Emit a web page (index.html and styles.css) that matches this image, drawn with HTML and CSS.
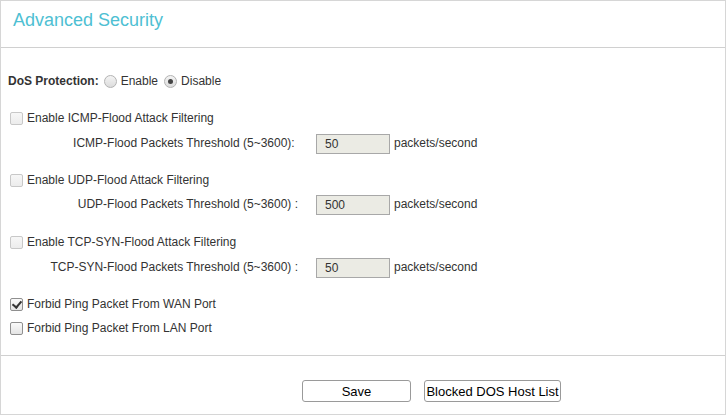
FILE: index.html
```html
<!DOCTYPE html>
<html>
<head>
<meta charset="utf-8">
<link rel="stylesheet" href="styles.css">
</head>
<body>
<div class="panel">
  <div class="header"><h1 class="title">Advanced Security</h1></div>
  <div class="content">
    <div class="row dos">
      <span class="bold">DoS Protection:</span>
      <label class="opt"><input type="radio" name="dos" class="radio">Enable</label>
      <label class="opt"><input type="radio" name="dos" class="radio" checked>Disable</label>
    </div>

    <label class="row check r-icmp"><input type="checkbox" class="cb" disabled>Enable ICMP-Flood Attack Filtering</label>
    <div class="row thresh t1">
      <span class="tlabel">ICMP-Flood Packets Threshold (5~3600):&nbsp;</span>
      <input class="num" type="text" value="50" disabled>
      <span class="unit">packets/second</span>
    </div>

    <label class="row check r-udp"><input type="checkbox" class="cb" disabled>Enable UDP-Flood Attack Filtering</label>
    <div class="row thresh t2">
      <span class="tlabel">UDP-Flood Packets Threshold (5~3600) :</span>
      <input class="num" type="text" value="500" disabled>
      <span class="unit">packets/second</span>
    </div>

    <label class="row check r-tcp"><input type="checkbox" class="cb" disabled>Enable TCP-SYN-Flood Attack Filtering</label>
    <div class="row thresh t3">
      <span class="tlabel">TCP-SYN-Flood Packets Threshold (5~3600) :</span>
      <input class="num" type="text" value="50" disabled>
      <span class="unit">packets/second</span>
    </div>

    <label class="row check r-wan"><input type="checkbox" class="cb" checked>Forbid Ping Packet From WAN Port</label>
    <label class="row check r-lan"><input type="checkbox" class="cb">Forbid Ping Packet From LAN Port</label>
  </div>
  <div class="footer">
    <button class="btn save">Save</button>
    <button class="btn blocked">Blocked DOS Host List</button>
  </div>
</div>
</body>
</html>
```

FILE: styles.css
```css
html, body {
  margin: 0;
  padding: 0;
  background: #fff;
}
body {
  font-family: "Liberation Sans", Arial, sans-serif;
  font-size: 12px;
  color: #333;
}
.panel {
  box-sizing: border-box;
  width: 726px;
  height: 415px;
  border: 1px solid #d6d6d6;
  display: flex;
  flex-direction: column;
}
.header {
  height: 47px;
  flex: none;
  border-bottom: 1px solid #d0d0d0;
  padding: 9px 0 0 12px;
  box-sizing: border-box;
}
.title {
  margin: 0;
  font-weight: normal;
  font-size: 18px;
  line-height: 20px;
  color: #4ebfd3;
}
.content {
  height: 308px;
  flex: none;
  border-bottom: 1px solid #d0d0d0;
  box-sizing: border-box;
  padding-left: 7px;
}
.row {
  display: flex;
  align-items: center;
  height: 24px;
}
.dos { margin-top: 21px; }
.bold { font-weight: bold; }
.opt {
  display: flex;
  align-items: center;
}
.radio {
  appearance: none;
  -webkit-appearance: none;
  box-sizing: border-box;
  width: 13px;
  height: 13px;
  border-radius: 50%;
  border: 1px solid #b3b3b3;
  background: linear-gradient(#f4f4f4, #dcdcdc);
  margin: 0 4px 0 5px;
  position: relative;
}
.opt + .opt .radio { margin-left: 6px; }
.radio:checked::after {
  content: "";
  position: absolute;
  left: 3px;
  top: 3px;
  width: 5px;
  height: 5px;
  border-radius: 50%;
  background: #444;
}
.cb {
  appearance: none;
  -webkit-appearance: none;
  box-sizing: border-box;
  width: 13px;
  height: 13px;
  border: 1px solid #8f8f8f;
  border-radius: 2px;
  background: linear-gradient(#fafafa, #e4e4e4);
  margin: 1px 4px 0 2px;
  position: relative;
}
.cb:disabled {
  border-color: #c8c8c8;
  background: linear-gradient(#f7f7f7, #ececec);
}
.cb:checked::after {
  content: "";
  position: absolute;
  left: 3px;
  top: 0px;
  width: 4px;
  height: 7px;
  border-right: 2px solid #333;
  border-bottom: 2px solid #333;
  transform: rotate(40deg);
}
.r-icmp { margin-top: 13px; }
.t1 { margin-top: 1px; }
.r-udp { margin-top: 13px; }
.r-tcp { margin-top: 14px; }
.t3 { margin-top: 1px; }
.r-wan { margin-top: 13px; }
.thresh { margin-left: -7px; }
.tlabel {
  width: 297px;
  text-align: right;
  white-space: pre;
}
.num {
  box-sizing: border-box;
  width: 74px;
  height: 20px;
  margin: 1px 4px 0 18px;
  padding: 0 0 0 8px;
  border: 1px solid #a8a8a8;
  background: #ebebe4;
  color: #333;
  font-family: "Liberation Sans", Arial, sans-serif;
  font-size: 12px;
}
.footer {
  flex: 1;
  display: flex;
  align-items: flex-start;
  padding: 24px 0 0 301px;
  box-sizing: border-box;
}
.btn {
  height: 22px;
  box-sizing: border-box;
  border: 1px solid #9a9a9a;
  border-radius: 3px;
  background: #fff;
  color: #000;
  font-family: "Liberation Sans", Arial, sans-serif;
  font-size: 13px;
  padding: 0;
}
.save { width: 109px; }
.blocked { width: 137px; margin-left: 13px; }
```
